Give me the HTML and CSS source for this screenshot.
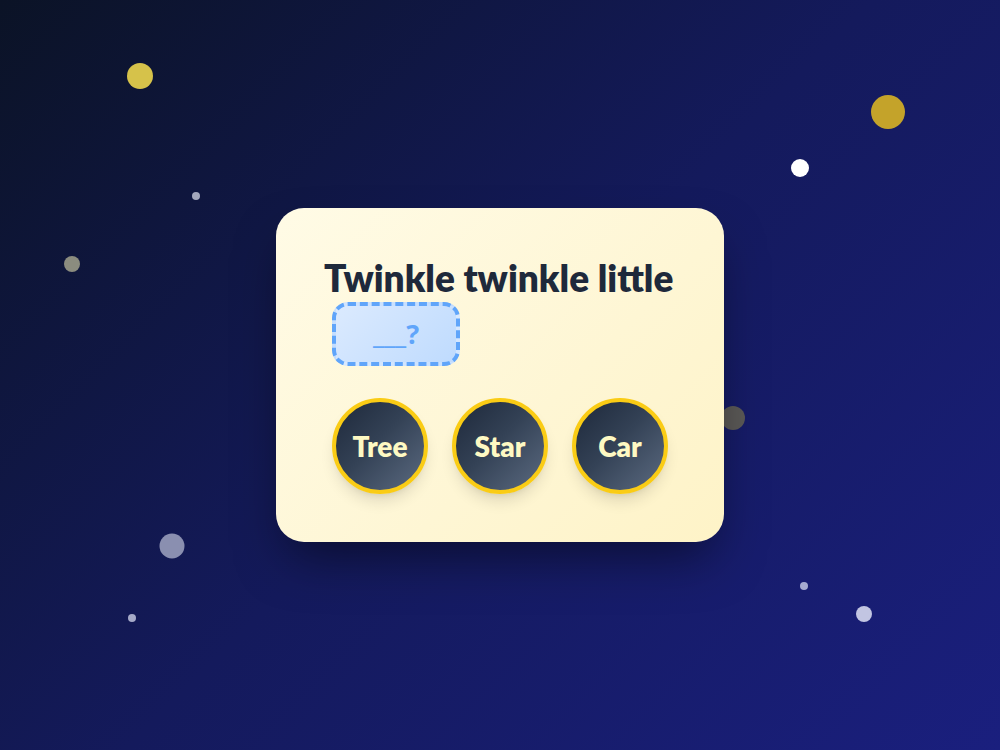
FILE: index.html
```html
<!DOCTYPE html>
<html lang="en">
<head>
    <meta charset="UTF-8">
    <meta name="viewport" content="width=device-width, initial-scale=1.0">
    <title>Twinkle Twinkle</title>
    <link rel="stylesheet" href="styles.css">
</head>
<body>
    <!-- background stars -->
    <div class="sky">
        <span class="star star-1"></span>
        <span class="star star-2"></span>
        <span class="star star-3"></span>
        <span class="star star-4"></span>
        <span class="star star-5"></span>
        <span class="star star-6"></span>
        <span class="star star-7"></span>
        <span class="star star-8"></span>
        <span class="star star-9"></span>
        <span class="star star-10"></span>
    </div>

    <div class="card">
        <h1 class="lyric"><span class="line">Twinkle twinkle little</span> <span class="blank">___?</span></h1>
        <div class="choices">
            <button class="choice">Tree</button>
            <button class="choice">Star</button>
            <button class="choice">Car</button>
        </div>
    </div>
</body>
</html>
```

FILE: styles.css
```css
html, body {
    height: 100%;
}
body {
    margin: 0;
    font-family: Lato, "Noto Sans", Arial, sans-serif;
    background: linear-gradient(135deg, #0b1326 0%, #141a5c 50%, #1a1f7e 100%);
    display: flex;
    align-items: center;
    justify-content: center;
    overflow: hidden;
    position: relative;
}
.sky {
    position: absolute;
    inset: 0;
}
.star {
    position: absolute;
    border-radius: 50%;
    transform: translate(-50%, -50%);
}
.star-1 { left: 140px; top: 76px; width: 26px; height: 26px; background: #d6c24a; }
.star-2 { left: 196px; top: 196px; width: 8px; height: 8px; background: #a4a8bc; }
.star-3 { left: 72px; top: 264px; width: 16px; height: 16px; background: #8b8c7f; }
.star-4 { left: 888px; top: 112px; width: 34px; height: 34px; background: #c4a32a; }
.star-5 { left: 800px; top: 168px; width: 18px; height: 18px; background: #ffffff; }
.star-6 { left: 733px; top: 418px; width: 24px; height: 24px; background: #5b5957; }
.star-7 { left: 172px; top: 546px; width: 25px; height: 25px; background: #8a8fb0; }
.star-8 { left: 132px; top: 618px; width: 8px; height: 8px; background: #a6aac8; }
.star-9 { left: 804px; top: 586px; width: 8px; height: 8px; background: #a6abd0; }
.star-10 { left: 864px; top: 614px; width: 16px; height: 16px; background: #c2c5e2; }

.card {
    position: relative;
    width: 448px;
    box-sizing: border-box;
    padding: 48px;
    border-radius: 28px;
    background: linear-gradient(135deg, #fffbe6 0%, #fef6d4 60%, #fef3c7 100%);
    box-shadow: 0 25px 50px -12px rgba(0, 0, 0, 0.5);
}
.lyric {
    margin: 0 0 32px;
    font-size: 37px;
    line-height: 44px;
    font-weight: 800;
    color: #1e293b;
}
.line {
    white-space: nowrap;
}
.blank {
    display: inline-block;
    vertical-align: top;
    margin: 2px 8px 0;
    width: 128px;
    height: 64px;
    box-sizing: border-box;
    border: 4px dashed #60a5fa;
    border-radius: 16px;
    background: linear-gradient(135deg, #dbeafe, #bfdbfe);
    color: #60a5fa;
    font-family: "Noto Sans", Arial, sans-serif;
    font-size: 27px;
    font-weight: 700;
    line-height: 56px;
    text-align: center;
}
.choices {
    display: flex;
    justify-content: center;
    gap: 24px;
}
.choice {
    width: 96px;
    height: 96px;
    padding: 0;
    border-radius: 50%;
    border: 4px solid #facc15;
    background: linear-gradient(135deg, #1e293b 0%, #334155 45%, #5b6a80 100%);
    color: #fef9c3;
    font-family: inherit;
    font-size: 28px;
    font-weight: 800;
    cursor: pointer;
    box-shadow: 0 10px 15px -3px rgba(0, 0, 0, 0.12), 0 4px 6px -4px rgba(0, 0, 0, 0.1);
}
```
